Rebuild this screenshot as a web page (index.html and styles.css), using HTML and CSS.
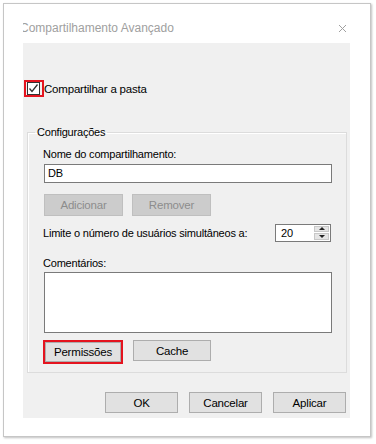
FILE: index.html
```html
<!DOCTYPE html>
<html lang="pt-BR">
<head>
    <meta charset="UTF-8">
    <title>Compartilhamento Avançado</title>
    <link rel="stylesheet" href="styles.css">
</head>
<body>
    <div class="window">
        <div class="titlebar">
            <span class="title"><span class="title-text">Compartilhamento Avançado</span></span>
            <svg class="close" width="9" height="9" viewBox="0 0 9 9"><path d="M1 1 L8 8 M8 1 L1 8" stroke="#a0a0a0" stroke-width="1"/></svg>
        </div>
        <div class="panel">
            <label class="share-row">
                <span class="mark">
                    <span class="checkbox">
                        <svg width="11" height="11" viewBox="0 0 11 11"><path d="M1.5 5.5 L4 8.5 L9.5 1.5" fill="none" stroke="#333" stroke-width="1.3"/></svg>
                    </span>
                </span>
                Compartilhar a pasta
            </label>

            <fieldset class="group">
                <legend>Configurações</legend>
                <div class="field-label">Nome do compartilhamento:</div>
                <div class="textbox">DB</div>
                <div class="btn-row">
                    <button class="btn" disabled>Adicionar</button>
                    <button class="btn" disabled>Remover</button>
                </div>
                <div class="limit-row">
                    <span>Limite o número de usuários simultâneos a:</span>
                    <div class="spinner">
                        <span class="spin-value">20</span>
                        <span class="spin-btns">
                            <span class="spin-btn"><span class="arrow-up"></span></span>
                            <span class="spin-btn"><span class="arrow-down"></span></span>
                        </span>
                    </div>
                </div>
                <div class="field-label comments">Comentários:</div>
                <div class="textarea"></div>
                <div class="btn-row perm-row">
                    <span class="mark"><button class="btn">Permissões</button></span>
                    <button class="btn">Cache</button>
                </div>
            </fieldset>

            <div class="dialog-buttons">
                <button class="btn">OK</button>
                <button class="btn">Cancelar</button>
                <button class="btn">Aplicar</button>
            </div>
        </div>
    </div>
</body>
</html>
```

FILE: styles.css
```css
body {
    margin: 0;
    background-color: #fff;
    font-family: 'Liberation Sans', Arial, sans-serif;
    font-size: 11px;
    letter-spacing: -0.2px;
    color: #000;
}
.window {
    margin: 3px;
    width: 368px;
    height: 434px;
    box-sizing: border-box;
    border: 1px solid #c6c6c6;
    box-shadow: 1px 1px 2px rgba(0, 0, 0, 0.25);
    background-color: #fff;
    display: flex;
    flex-direction: column;
}
.titlebar {
    height: 39px;
    box-sizing: border-box;
    padding: 16px 23px 0 19px;
    display: flex;
    justify-content: space-between;
    align-items: flex-start;
}
.title {
    overflow: hidden;
    font-size: 12px;
    letter-spacing: 0;
    line-height: 16px;
    color: #a0a0a0;
}
.title-text {
    display: block;
    margin-left: -3px;
}
.close {
    margin-top: 4px;
}
.panel {
    flex: 1;
    margin: 0 20px 18px 19px;
    background-color: #f0f0f0;
    padding: 37px 4px 0 1px;
}
.share-row {
    display: flex;
    align-items: center;
    height: 17px;
    line-height: 16px;
    font-size: 11.5px;
}
.mark {
    display: inline-flex;
    align-items: center;
    border: 2px solid #e4141f;
}
.share-row .mark {
    width: 16px;
    height: 13px;
}
.checkbox {
    width: 11px;
    height: 11px;
    margin-left: 1px;
    border: 1px solid #333;
    background-color: #fff;
    display: flex;
}
.group {
    margin: 27px 0 0 3px;
    padding: 6px 14px 8px 16px;
    width: 320px;
    box-sizing: border-box;
    border: 1px solid #dcdcdc;
    box-shadow: inset 1px 1px 0 #fff;
    min-width: 0;
}
.group legend {
    margin-left: -9px;
    padding: 0 2px;
    line-height: 16px;
}
.field-label {
    line-height: 16px;
    margin-left: -1px;
}
.textbox {
    margin-top: 2px;
    height: 19px;
    box-sizing: border-box;
    border: 1px solid #7a7a7a;
    background-color: #fff;
    padding-left: 3px;
    line-height: 17px;
}
.btn-row {
    display: flex;
    align-items: flex-start;
    gap: 9px;
    margin-top: 11px;
}
.btn {
    font-family: inherit;
    font-size: 11.5px;
    letter-spacing: -0.2px;
    color: #000;
    width: 79px;
    height: 22px;
    padding: 0;
    margin: 0;
    background-color: #e1e1e1;
    border: 1px solid #adadad;
    border-radius: 0;
}
.btn:disabled {
    background-color: #cccccc;
    border-color: #bfbfbf;
    color: #8c8c8c;
}
.limit-row {
    display: flex;
    justify-content: space-between;
    align-items: center;
    margin-top: 8px;
    height: 17px;
    margin-left: -1px;
}
.spinner {
    display: flex;
    width: 56px;
    height: 18px;
    box-sizing: border-box;
    border: 1px solid #7a7a7a;
    background-color: #fff;
    margin-right: 1px;
}
.spin-value {
    flex: 1;
    padding-left: 5px;
    line-height: 16px;
}
.spin-btns {
    display: flex;
    flex-direction: column;
    gap: 1px;
    width: 15px;
    padding: 1px 1px 1px 0;
}
.spin-btn {
    flex: 1;
    background-color: #e5e5e5;
    border: 1px solid #c8c8c8;
    display: flex;
    align-items: center;
    justify-content: center;
}
.arrow-up {
    border-left: 3px solid transparent;
    border-right: 3px solid transparent;
    border-bottom: 3px solid #222;
}
.arrow-down {
    border-left: 3px solid transparent;
    border-right: 3px solid transparent;
    border-top: 3px solid #222;
}
.comments {
    margin-top: 14px;
}
.textarea {
    margin-top: 1px;
    height: 61px;
    box-sizing: border-box;
    border: 1px solid #7a7a7a;
    background-color: #fff;
}
.perm-row {
    margin-top: 7px;
    margin-left: -1px;
    gap: 10px;
}
.perm-row .mark .btn {
    width: 76px;
    height: 20px;
}
.perm-row > .btn {
    width: 78px;
    height: 21px;
}
.dialog-buttons {
    display: flex;
    justify-content: flex-end;
    gap: 11px;
    margin-top: 19px;
}
.dialog-buttons .btn {
    width: 73px;
    height: 21px;
}
```
